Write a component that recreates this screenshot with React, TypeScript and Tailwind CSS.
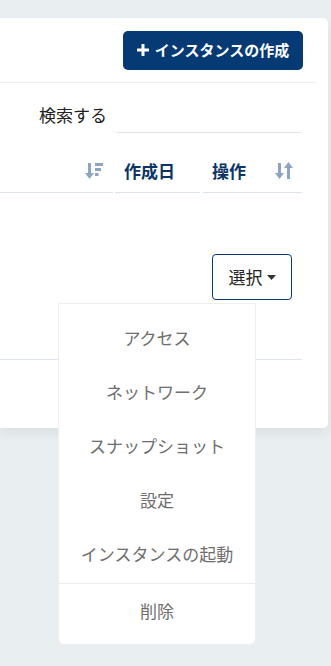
import React from "react";

const F = { fontFamily: '"Noto Sans CJK JP", "Noto Sans", sans-serif' };

function SortDown() {
  return (
    <svg width="18" height="20" viewBox="0 0 18 20" fill="#8ea4c1">
      <rect x="3" y="2" width="3" height="12" />
      <polygon points="0,12 9,12 4.5,18" />
      <rect x="10" y="2" width="8" height="3" />
      <rect x="10" y="7" width="6" height="3" />
      <rect x="10" y="12" width="3.5" height="3" />
    </svg>
  );
}

function SortBoth() {
  return (
    <svg width="18" height="20" viewBox="0 0 18 20" fill="#8ea4c1">
      <rect x="3" y="2" width="3" height="12" />
      <polygon points="0,12 9,12 4.5,18" />
      <rect x="12" y="6" width="3" height="12" />
      <polygon points="9,7 18,7 13.5,1" />
    </svg>
  );
}

export default function App() {
  const items = ["アクセス", "ネットワーク", "スナップショット", "設定", "インスタンスの起動"];
  return (
    <div className="relative min-h-[666px] bg-[#e9eef1] pt-[18px] pr-[3px]" style={F}>
      <div className="h-[410px] rounded-r-[5px] bg-white shadow-[0_6px_12px_rgba(0,0,0,0.06)]">
        <div className="mr-[12px] flex h-[65px] items-center justify-end border-b border-[#eceef4] pr-[13px]">
          <button className="flex h-[39px] w-[180px] items-center justify-center gap-[6px] rounded-[5px] bg-[#053a75] text-[15px] font-bold text-white">
            <svg width="12" height="12" viewBox="0 0 12 12" fill="white">
              <rect x="4.5" y="0" width="3" height="12" rx="0.5" />
              <rect x="0" y="4.5" width="12" height="3" rx="0.5" />
            </svg>
            <span>インスタンスの作成</span>
          </button>
        </div>
        <div className="mr-[26px] mt-[13px] flex h-[37px] items-center justify-end">
          <span className="mr-[8px] text-[17px] text-[#222]">検索する</span>
          <div className="h-[37px] w-[187px] rounded-b-[3px] border-b border-[#dfe4f3]" />
        </div>
        <div className="mt-[17px] flex h-[43px] w-[302px] items-stretch text-[17px] font-bold text-[#0c3466]">
          <div className="flex w-[113px] items-center justify-end border-b border-[#dde3f5] pr-[10px]">
            <SortDown />
          </div>
          <div className="ml-[2px] flex w-[85px] items-center border-b border-[#dde3f5] pl-[9px]">作成日</div>
          <div className="ml-[3px] flex flex-1 items-center justify-between border-b border-[#dde3f5] pl-[9px] pr-[9px]">
            <span>操作</span>
            <SortBoth />
          </div>
        </div>
        <div className="flex w-[292px] justify-end pt-[61px]">
          <button className="flex h-[46px] w-[80px] items-center justify-center gap-[4px] rounded-[4px] border border-[#053a75] text-[17px] text-[#222]">
            <span>選択</span>
            <svg width="9" height="5" viewBox="0 0 9 5" fill="#333">
              <polygon points="0,0 9,0 4.5,5" />
            </svg>
          </button>
        </div>
        <div className="mt-[59px] w-[302px] border-b border-[#dde4f5]" />
      </div>
      <div className="absolute left-[58px] top-[303px] w-[198px] rounded-b-[6px] border border-[#eeeeee] bg-white pt-[7px] pb-[7px] text-[17px] text-[#6e6e6e]">
        {items.map((t) => (
          <div key={t} className="flex h-[54px] items-center justify-center">
            {t}
          </div>
        ))}
        <div className="mt-[2px] border-t border-[#ececec]" />
        <div className="flex h-[53px] items-center justify-center">削除</div>
      </div>
    </div>
  );
}
